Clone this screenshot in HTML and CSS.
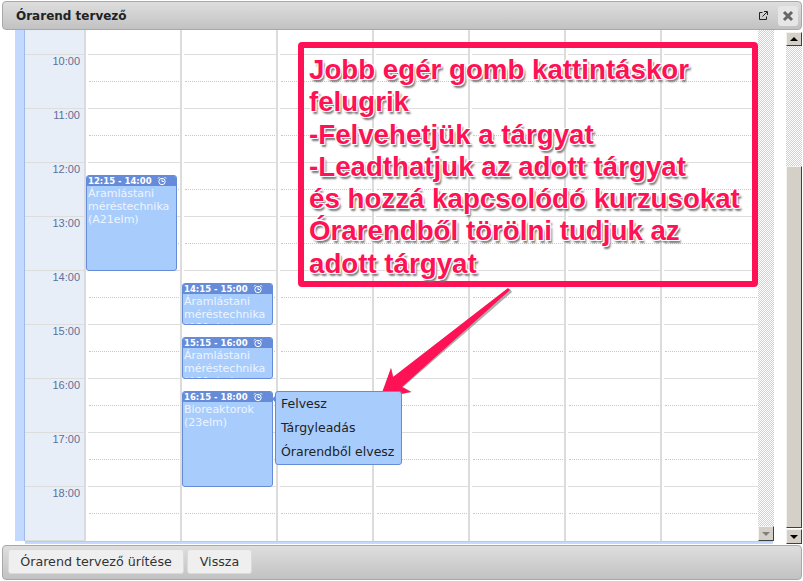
FILE: index.html
```html
<!DOCTYPE html>
<html lang="hu">
<head>
<meta charset="utf-8">
<title>Órarend tervező</title>
<link rel="stylesheet" href="styles.css">
</head>
<body>
<div class="page">
  <header class="titlebar">
    <h1 class="title">Órarend tervező</h1>
    <svg class="popout" width="9" height="9" viewBox="0 0 9 9"><path d="M3.5 1.5H.5V8.5H7.5V5.5M3.5 5.5L8 1M5 .5H8.5V4" fill="none" stroke="#222" stroke-width="1"/></svg>
    <div class="close"><svg width="12" height="12" viewBox="0 0 12 12"><path d="M2 2L10 10M10 2L2 10" stroke="#666" stroke-width="3"/></svg></div>
  </header>
  <main class="main">
    <div class="gutter"></div>
    <div class="calwrap">
      <div class="cal">
        <div class="strip"></div>
        <div class="times">
          <div class="topcell"></div>
          <div class="tcell">10:00</div>
          <div class="tcell">11:00</div>
          <div class="tcell">12:00</div>
          <div class="tcell">13:00</div>
          <div class="tcell">14:00</div>
          <div class="tcell">15:00</div>
          <div class="tcell">16:00</div>
          <div class="tcell">17:00</div>
          <div class="tcell">18:00</div>
        </div>
        <div class="day"><div class="topcell"></div><div class="cell"></div><div class="cell"></div><div class="cell"></div><div class="cell"></div><div class="cell"></div><div class="cell"></div><div class="cell"></div><div class="cell"></div><div class="cell"></div>
          <div class="event ev1">
            <div class="evhead">12:15 - 14:00<span class="clock"><svg width="10" height="10" viewBox="0 0 10 10"><circle cx="5" cy="5.5" r="3.2" fill="none" stroke="#fff"/><path d="M5 3.5V5.5H7M1 2.5L2.5 1M9 2.5L7.5 1" fill="none" stroke="#fff"/></svg></span></div>
            <div class="evbody">Áramlástani méréstechnika (A21elm)</div>
          </div>
        </div>
        <div class="day"><div class="topcell"></div><div class="cell"></div><div class="cell"></div><div class="cell"></div><div class="cell"></div><div class="cell"></div><div class="cell"></div><div class="cell"></div><div class="cell"></div><div class="cell"></div>
          <div class="event ev2">
            <div class="evhead">14:15 - 15:00<span class="clock"><svg width="10" height="10" viewBox="0 0 10 10"><circle cx="5" cy="5.5" r="3.2" fill="none" stroke="#fff"/><path d="M5 3.5V5.5H7M1 2.5L2.5 1M9 2.5L7.5 1" fill="none" stroke="#fff"/></svg></span></div>
            <div class="evbody">Áramlástani méréstechnika (A21elm)</div>
          </div>
          <div class="event ev3">
            <div class="evhead">15:15 - 16:00<span class="clock"><svg width="10" height="10" viewBox="0 0 10 10"><circle cx="5" cy="5.5" r="3.2" fill="none" stroke="#fff"/><path d="M5 3.5V5.5H7M1 2.5L2.5 1M9 2.5L7.5 1" fill="none" stroke="#fff"/></svg></span></div>
            <div class="evbody">Áramlástani méréstechnika (A21elm)</div>
          </div>
          <div class="event ev4">
            <div class="evhead">16:15 - 18:00<span class="clock"><svg width="10" height="10" viewBox="0 0 10 10"><circle cx="5" cy="5.5" r="3.2" fill="none" stroke="#fff"/><path d="M5 3.5V5.5H7M1 2.5L2.5 1M9 2.5L7.5 1" fill="none" stroke="#fff"/></svg></span></div>
            <div class="evbody">Bioreaktorok (23elm)</div>
          </div>
          <div class="menu">
            <div class="menuitem">Felvesz</div>
            <div class="menuitem">Tárgyleadás</div>
            <div class="menuitem">Órarendből elvesz</div>
          </div>
        </div>
        <div class="day"><div class="topcell"></div><div class="cell"></div><div class="cell"></div><div class="cell"></div><div class="cell"></div><div class="cell"></div><div class="cell"></div><div class="cell"></div><div class="cell"></div><div class="cell"></div></div>
        <div class="day"><div class="topcell"></div><div class="cell"></div><div class="cell"></div><div class="cell"></div><div class="cell"></div><div class="cell"></div><div class="cell"></div><div class="cell"></div><div class="cell"></div><div class="cell"></div></div>
        <div class="day"><div class="topcell"></div><div class="cell"></div><div class="cell"></div><div class="cell"></div><div class="cell"></div><div class="cell"></div><div class="cell"></div><div class="cell"></div><div class="cell"></div><div class="cell"></div></div>
        <div class="day"><div class="topcell"></div><div class="cell"></div><div class="cell"></div><div class="cell"></div><div class="cell"></div><div class="cell"></div><div class="cell"></div><div class="cell"></div><div class="cell"></div><div class="cell"></div></div>
        <div class="day lastday"><div class="topcell"></div><div class="cell"></div><div class="cell"></div><div class="cell"></div><div class="cell"></div><div class="cell"></div><div class="cell"></div><div class="cell"></div><div class="cell"></div><div class="cell"></div></div>
        <div class="innerbar">
          <div class="track"></div>
          <div class="sbtn sbtn-off"><span class="tri-down tri-off"></span></div>
        </div>
      </div>
      <div class="blueline"></div>
    </div>
    <div class="outerbar">
      <div class="sbtn sbtn-up"><span class="tri-up"></span></div>
      <div class="track outertrack"></div>
      <div class="thumb"></div>
      <div class="sbtn sbtn-down"><span class="tri-down"></span></div>
    </div>
  </main>
  <footer class="footer">
    <button class="btn btn-wide">Órarend tervező ürítése</button>
    <button class="btn btn-back">Vissza</button>
  </footer>
  <div class="note">Jobb egér gomb kattintáskor<br>felugrik<br>-Felvehetjük a tárgyat<br>-Leadthatjuk az adott tárgyat<br>és hozzá kapcsolódó kurzusokat<br>Órarendből törölni tudjuk az<br>adott tárgyat</div>
  <svg class="arrow" width="803" height="581" viewBox="0 0 803 581">
    <polygon class="arrowshade" points="510,289 394,378 391,368 381,398 412,392 403,387 512,292"/>
    <polygon class="arrowfill" points="508,288 393,377 391,368 380,398 411,392 402,387 510,290"/>
  </svg>
</div>
</body>
</html>
```
FILE: styles.css
```css
* { box-sizing: border-box; }
html, body { margin: 0; padding: 0; background: #fff; }
.page { position: relative; width: 803px; height: 581px; overflow: hidden; display: flex; flex-direction: column; }

.titlebar {
  height: 29px; margin: 1px 1px 0 2px; padding: 0 3px 0 13px;
  display: flex; align-items: center;
  border: 1px solid #a8a8a8; border-radius: 4px;
  background: linear-gradient(#dedede, #c2c2c2);
  flex: none;
}
.title { flex: 1; margin: 0; font: bold 12px "DejaVu Sans", sans-serif; color: #222; }
.popout { margin-right: 10px; }
.close {
  width: 20px; height: 20px; border-radius: 3px; background: #e6e6e6;
  display: flex; align-items: center; justify-content: center;
}

.main { height: 515px; flex: none; display: flex; }
.gutter { width: 15px; flex: none; }
.calwrap { width: 759px; flex: none; }
.cal { display: flex; height: 511px; }
.strip { width: 10px; flex: none; background: #c3d9ff; border-right: 1px solid #9fbce8; }
.times { width: 61px; flex: none; background: #e8eef7; border-right: 2px solid #d8dce2; border-bottom: 1px solid #dddddd; }
.topcell { height: 24px; }
.tcell {
  height: 54px; border-top: 1px solid #dddddd; padding-right: 4px; text-align: right;
  font: 11px/13px "Liberation Sans", sans-serif; color: #5f6f99;
}
.day { position: relative; width: 96px; flex: none; border-right: 2px solid #dcdcdc; padding-left: 2px; }
.lastday { border-right: 0; }
.cell { position: relative; height: 54px; border-top: 1px solid #dddddd; }
.cell::after {
  content: ""; position: absolute; left: 1px; right: 1px; top: 26px;
  border-top: 1px dotted #c8c8c8;
}

.event {
  position: absolute; left: 0; width: 91px; z-index: 2;
  border: 1px solid #668cd9; border-radius: 3px; background: #a8cdfd; overflow: hidden;
}
.ev1 { top: 145px; height: 96px; }
.ev2 { top: 253px; height: 42px; }
.ev3 { top: 307px; height: 42px; }
.ev4 { top: 361px; height: 96px; }
.evhead {
  display: flex; align-items: center;
  height: 10px; padding: 0 0 0 1px; background: #668cd9; color: #fff;
  font: bold 8.5px/10px "DejaVu Sans", sans-serif; white-space: nowrap;
}
.clock { display: flex; margin-left: 5px; }
.evbody { padding: 1px 0 0 1px; font: 11px/13px "DejaVu Sans", sans-serif; color: #eef4ff; }

.menu {
  position: absolute; left: 93px; top: 361px; width: 127px; height: 74px; z-index: 2;
  border: 1px solid #668cd9; border-radius: 3px; background: #a8cdfd;
}
.menu::before {
  content: ""; position: absolute; left: -4px; top: 3px;
  border-style: solid; border-width: 4px 4px 4px 0; border-color: transparent #668cd9 transparent transparent;
}
.menuitem { height: 24px; padding-left: 5px; font: 12.5px/24px "DejaVu Sans", sans-serif; color: #222; white-space: nowrap; }

.innerbar { width: 16px; flex: none; display: flex; flex-direction: column; }
.track {
  flex: 1;
  background-color: #fff;
  background-image: conic-gradient(#d4d0c8 25%, #fff 0 50%, #d4d0c8 0 75%, #fff 0);
  background-size: 2px 2px;
}
.sbtn {
  height: 15px; flex: none; display: flex; align-items: center; justify-content: center;
  background: #d4d0c8; border: 1px solid; border-color: #f4f2ee #404040 #404040 #f4f2ee;
}
.tri-down, .tri-up { width: 0; height: 0; border-style: solid; border-color: transparent; }
.tri-down { border-width: 4px 4px 0; border-top-color: #000; }
.tri-up { border-width: 0 4px 4px; border-bottom-color: #000; }
.tri-off { border-top-color: #808080; }
.blueline { width: 748px; margin-left: 10px; height: 3px; background: #c3d9ff; border-top: 1px solid #b5ccf0; }

.outerbar { margin-left: 12px; width: 16px; flex: none; display: flex; flex-direction: column; padding-top: 2px; }
.sbtn-up { height: 14px; }
.sbtn-down { margin-top: 1px; }
.outertrack { flex: none; height: 120px; }
.thumb { height: 362px; flex: none; background: #d4d0c8; border: 1px solid; border-color: #f4f2ee #404040 #404040 #f4f2ee; }

.footer {
  flex: none; height: 35px; margin: 0 1px 0 2px; padding: 3px 5px;
  display: flex; gap: 3px; align-items: flex-start;
  border: 1px solid #a8a8a8; border-radius: 4px;
  background: linear-gradient(#dedede, #c2c2c2);
}
.btn {
  height: 25px; padding: 0; border: 1px solid #dadada; border-radius: 3px;
  background: #efefef; color: #333; font: 12.7px "DejaVu Sans", sans-serif;
}
.btn-wide { width: 176px; }
.btn-back { width: 65px; }

.note {
  position: absolute; left: 298px; top: 42px; width: 460px; height: 245px;
  padding: 6px 0 0 5px;
  border: 6px solid #ff1155; border-radius: 4px;
  font: bold 27.7px/32.3px "Liberation Sans", sans-serif; color: #ff1155; white-space: nowrap;
  text-shadow: 1px 1px 0 #fff, -1px -1px 0 #fff, 1px -1px 0 #fff, -1px 1px 0 #fff, 2px 3px 2px #777;
}
.arrow { position: absolute; left: 0; top: 0; pointer-events: none; }
.arrowshade { fill: #777; opacity: .6; }
.arrowfill { fill: #ff1155; }
```
